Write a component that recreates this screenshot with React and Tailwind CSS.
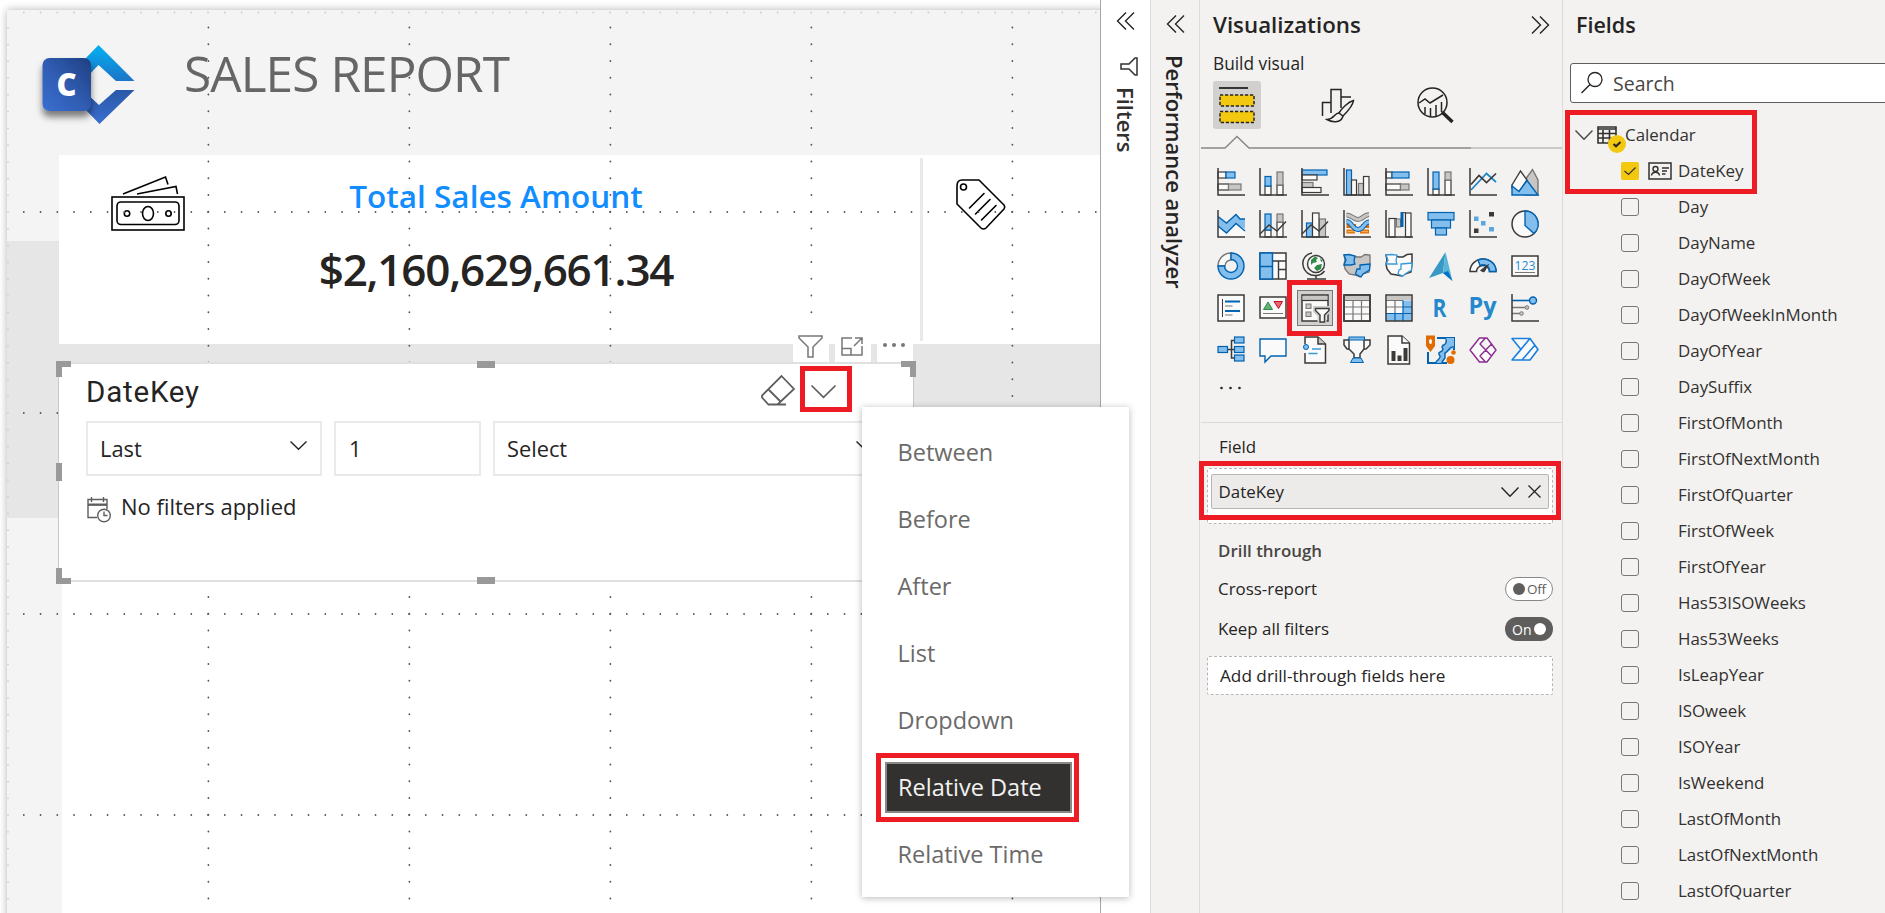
import React from "react";

const D = "#3b3a39";
const BF = "#83beec";
const BS = "#0063b1";
const GF = "#c8c6c4";
const GS = "#797775";
const W = "#fafafa";

const Axis = () => <path d="M1 0V27H28" fill="none" stroke={D} strokeWidth="1.5" />;
const Box = ({ x, y, w, h, t = "w" }) => {
  const c = { b: [BF, BS], g: [GF, GS], w: [W, D] }[t];
  return <rect x={x} y={y} width={w} height={h} fill={c[0]} stroke={c[1]} strokeWidth="1.2" />;
};
const Line = ({ d, s = D, w = 1.4, f = "none" }) => <path d={d} fill={f} stroke={s} strokeWidth={w} />;

const visuals = [
  <><Box x={1} y={4} w={8} h={6} /><Box x={9} y={4} w={9} h={6} t="b" /><Box x={1} y={16} w={10.5} h={6} /><Box x={11.5} y={16} w={12.5} h={6} t="g" /><Axis /></>,
  <><Box x={6} y={18} w={6} h={9} /><Box x={6} y={8.5} w={6} h={9.5} t="b" /><Box x={18} y={17} w={6} h={10} /><Box x={18} y={4} w={6} h={13} t="g" /><Axis /></>,
  <><Box x={1} y={2} w={25} h={5} t="b" /><Box x={1} y={7} w={15} h={5} /><Box x={1} y={14.5} w={11} h={5} t="g" /><Box x={1} y={19.5} w={19} h={5} /><Axis /></>,
  <><Box x={3.5} y={2} w={5} h={25} t="b" /><Box x={8.5} y={12} w={5} h={15} /><Box x={15.5} y={15.5} w={5} h={11.5} t="g" /><Box x={20.5} y={8.5} w={5.5} h={18.5} /><Axis /></>,
  <><Box x={1} y={4} w={6} h={6} /><Box x={7} y={4} w={17} h={6} t="b" /><Box x={1} y={16} w={14.5} h={6} /><Box x={15.5} y={16} w={8.5} h={6} t="g" /><Axis /></>,
  <><Box x={6} y={21} w={6} h={6} /><Box x={6} y={4} w={6} h={17} t="b" /><Box x={18} y={12} w={6} h={15} /><Box x={18} y={4} w={6} h={8} t="g" /><Axis /></>,
  <><Line d="M2 22L17.500 5.500L27 14" s="#1a86c9" w={1.7} /><Line d="M2 16.500L10 7.500L17.500 14.500L27 5.500" w={1.7} /><Axis /></>,
  <><Line d="M14 12L21.500 1.500L27 12V27H14Z" f={GF} s={GS} /><Line d="M1 17L9.500 3L16 12L8 24L1 20Z" f={W} /><Line d="M1 18L8 23.500L16 12.500L27 27H1Z" f={BF} s={BS} /></>,

  <><path d="M1 19L9.500 23L19 14L28 19V27H1Z" fill={W} /><path d="M1 6.500L9.500 13L19 4.500L23 9H28V19L19 14L9.500 23L1 16Z" fill={BF} /><Line d="M1 6.500L9.500 13L19 4.500L23 9H28M1 16L9.500 23L19 13.500L28 21" s={BS} /><Axis /></>,
  <><Box x={6} y={20} w={6} h={7} /><Box x={6} y={4} w={6} h={16} t="b" /><Box x={18} y={12} w={6} h={15} /><Box x={18} y={4} w={6} h={8} t="g" /><Line d="M1 24L10 15L18 21L27 11.500" /><Axis /></>,
  <><Box x={5.5} y={13} w={6} h={14} t="b" /><Box x={18} y={9} w={6.5} h={18} t="g" /><Box x={11.5} y={3} w={6.5} h={24} /><Line d="M1 24L10 15L18 21L27 11.500" /><Axis /></>,
  <><path d="M3.500 16H13M3.500 21.500H12M18 16H26M17 21.500H26" fill="none" stroke="#e06c00" strokeWidth="4" /><path d="M4.500 21.500H12M18 21.500H25" fill="none" stroke="#f5a84c" strokeWidth="1.500" /><path d="M3.500 5C9 5 10 9.500 15 9.500S20 5 26 4.500" fill="none" stroke={GS} strokeWidth="5" /><path d="M3.500 5C9 5 10 9.500 15 9.500S20 5 26 4.500" fill="none" stroke={GF} strokeWidth="3" /><path d="M3.500 11.500C9 11.500 9 19.500 15 19.500S21 12 26 12" fill="none" stroke={BS} strokeWidth="5" /><path d="M3.500 11.500C9 11.500 9 19.500 15 19.500S21 12 26 12" fill="none" stroke={BF} strokeWidth="3" /><Axis /></>,
  <><Box x={4} y={8.500} w={6} h={18.500} /><rect x="11.500" y="9" width="4" height="8" fill={GF} stroke={GS} /><Box x={20.5} y={3} w={5.5} h={24} /><rect x="15.500" y="2" width="3" height="15" fill={BS} /><path d="M10 8.500H12M18 2.700H21" stroke={D} /><Axis /></>,
  <><Box x={1} y={2.5} w={26} h={7.5} t="b" /><Box x={4.500} y={10} w={19} h={8} t="b" /><Box x={8.500} y={18} w={11} h={7} t="b" /></>,
  <><rect x="20" y="2" width="5" height="4.500" fill={D} /><rect x="5" y="6.500" width="4.500" height="4.500" fill="#5aa7df" /><rect x="12" y="11" width="4.500" height="4.500" fill="#5aa7df" /><rect x="20" y="17" width="5" height="4.500" fill="#5aa7df" /><rect x="5" y="18.500" width="4.500" height="4.500" fill={D} /><Axis /></>,
  <><circle cx="14" cy="14" r="13" fill={W} stroke={D} strokeWidth="1.500" /><path d="M14 1A13 13 0 0 1 23 23.500L14 15.500Z" fill={BF} stroke={BS} strokeWidth="1.400" /></>,

  <><path d="M1 14A13 13 0 0 1 14 1V8A6 6 0 0 0 8 14Z" fill={W} stroke={GS} strokeWidth="1.400" /><path d="M14 1A13 13 0 1 1 1 14H7.500A6.500 6.500 0 1 0 14 7.500Z" fill={BF} stroke={BS} strokeWidth="1.400" /></>,
  <><rect x="1" y="1" width="26" height="26" fill={W} stroke={D} strokeWidth="1.500" /><rect x="1" y="1" width="12.500" height="26" fill={BF} stroke={BS} strokeWidth="1.500" /><path d="M1 14.500H13.500" stroke={BS} strokeWidth="1.500" /><path d="M13.500 9H27M19.500 9V27M19.500 17.500H27" stroke={D} strokeWidth="1.400" /></>,
  <><circle cx="15" cy="12" r="8.500" fill={W} stroke={D} strokeWidth="1.400" /><path d="M10 8L14 4.500L17 6L15 8L16 10L12 11L10 13ZM16 13L21 12L20 17L16 19L13 16ZM19 6L22 9L20 10Z" fill="#2e8b45" /><path d="M11 1C5 2 1 7 2 13C3 20 9 24 15 23.500C19 23.500 22 21 23.500 19M15 23.500V27M6 27H25" fill="none" stroke={D} strokeWidth="1.500" /></>,
  <><path d="M1 3H6L14 5L18 5L22 2.500L27 3V12L26 20L20 22L17 25L12 23L6 22L2 17L1 12L2 8Z" fill={GF} stroke={GS} strokeWidth="1.300" /><path d="M1 3L6 2.500L12 4L11 9L12 12L8 13L1 13L3 8Z" fill={BF} stroke={BS} strokeWidth="1.300" /><path d="M17 13L27 12L26.500 18L20 22L18 25L12.500 22L14 17H17Z" fill={BF} stroke={BS} strokeWidth="1.300" /></>,
  <><path d="M1 3H6L14 5L18 5L22 2.500L27 2V12L26 20L20 22L17 24L12 23L6 22L2 17L1 12L2 8Z" fill={W} stroke={D} strokeWidth="1.500" /><path d="M1 3L6 2.500L12 3L11 9L12 12L8 12L1 12L3 8Z" fill={W} stroke="#3a9ad9" strokeWidth="1.300" /><path d="M16 12L27 11L26.500 18L20 22L18 24L13 22L14 18L16 17Z" fill={W} stroke="#3a9ad9" strokeWidth="1.300" /></>,
  <><path d="M18.500 0L2 26L16 21Z" fill="#3999c6" /><path d="M18.500 0L16 21L25.500 29Z" fill="#59b4d9" /><path d="M16 21L21 19L25.500 29Z" fill="#0072c6" /></>,
  <><path d="M1 19.500A13 12.500 0 0 1 27 19.500H20.500A6.500 6 0 0 0 7.500 19.500Z" fill={W} stroke={D} strokeWidth="1.500" /><path d="M9 8A13 12 0 0 1 27 19.500H20.500A6.500 6 0 0 0 11 13.500Z" fill={BF} stroke={BS} strokeWidth="1.400" /><path d="M19.500 12.500L11.500 18.500L15 20Z" fill={D} stroke={D} /></>,
  <><rect x="1" y="4" width="26" height="20" fill={W} stroke={D} strokeWidth="1.500" /><text x="14" y="18.300" textAnchor="middle" fontSize="13" fill="#2a8ad4" fontFamily="Open Sans, sans-serif" textLength="21" lengthAdjust="spacingAndGlyphs">123</text><path d="M4 20.500H24" stroke={GS} /></>,

  <><rect x="1" y="1" width="26" height="26" fill={W} stroke={D} strokeWidth="1.500" /><path d="M5.500 5V23" stroke={D} /><path d="M8 7.500H23M8 17H23" stroke={BS} strokeWidth="2" /><path d="M8 12H15.500M8 21H15.500" stroke={GS} strokeWidth="1.200" /></>,
  <><rect x="1" y="3" width="26" height="21" fill={W} stroke={D} strokeWidth="1.500" /><path d="M4.500 15.500L9 8L13.500 15.500Z" fill="#5fb271" stroke="#2e8b45" /><path d="M15 7.500H23.500L19.500 14.500Z" fill="#e86b6b" stroke="#c50f1f" /><path d="M4 19.500H24" stroke={GS} /></>,
  <><rect x="1" y="1" width="26" height="26" fill={W} stroke={D} strokeWidth="1.500" /><path d="M1.500 2H26.500V6H1.500Z" fill={GF} /><path d="M1 6.500H27" stroke={D} strokeWidth="1.200" /><rect x="5" y="10" width="5" height="4.500" fill={GF} stroke={GS} /><rect x="5" y="18" width="5" height="4.500" fill={GF} stroke={GS} /><path d="M14 14H28V17L23.500 21V28H18.500V21L14 17Z" fill={W} stroke="#d2d0ce" strokeWidth="4" /><path d="M14.500 14.500H28V16.500L23.500 21V28H19V21L14.500 16.500Z" fill={W} stroke={D} strokeWidth="1.400" /></>,
  <><rect x="1" y="1" width="26" height="26" fill={W} stroke={D} strokeWidth="1.500" /><path d="M2 2H26V6H2Z" fill={GF} /><path d="M1 6.500H27M1 13H27M1 20H27M10 6.500V27M18.500 6.500V27" stroke={GS} strokeWidth="1.200" /><rect x="1" y="1" width="26" height="26" fill="none" stroke={D} strokeWidth="1.500" /></>,
  <><rect x="1" y="1" width="26" height="26" fill={W} /><path d="M2 2H26V6H2Z" fill={GF} /><path d="M18 6.500H27V27H1V19H18Z" fill={BF} /><path d="M1 6.500H18M1 13H18M10 6.500V19" stroke={GS} strokeWidth="1.200" /><path d="M18 6.500V27M10 19V27M18 13H27M1 19.500H27" stroke={BS} strokeWidth="1.200" /><rect x="1" y="1" width="26" height="26" fill="none" stroke={D} strokeWidth="1.500" /></>,
  <text x="12.500" y="22.500" textAnchor="middle" fontSize="25" fontWeight="700" fill="#2588cc" fontFamily="Open Sans, sans-serif" textLength="14" lengthAdjust="spacingAndGlyphs">R</text>,
  <text x="-.5" y="19.500" fontSize="24" fontWeight="700" fill="#2588cc" fontFamily="Open Sans, sans-serif" textLength="28" lengthAdjust="spacingAndGlyphs">Py</text>,
  <><path d="M1 6.500H20" stroke={BS} strokeWidth="1.600" /><path d="M1 13.500H14M1 19.500H9" stroke={GS} strokeWidth="1.500" /><circle cx="22" cy="6.500" r="3.500" fill={BF} stroke={BS} strokeWidth="1.400" /><circle cx="16" cy="13.500" r="1.800" fill={GF} stroke={GS} /><circle cx="10.500" cy="19.500" r="1.800" fill={GF} stroke={GS} /><Axis /></>,

  <><path d="M10 13.500H17M18 4.500H14.500V22H18M14.500 13.500" fill="none" stroke={D} strokeWidth="1.500" /><Box x={1} y={10.5} w={9.5} h={6} t="b" /><Box x={17.5} y={1} w={9.5} h={6} t="b" /><Box x={17.5} y={10.500} w={9.5} h={6} t="b" /><Box x={17.5} y={19} w={9.5} h={6} t="b" /></>,
  <Line d="M1 3H27V20H12L6 26V20H1Z" f={W} s={BS} />,
  <><path d="M4 17V27H24.500V8L17 1H4V8" fill={W} stroke={D} strokeWidth="1.500" /><path d="M17 1V8H24.500" fill={GF} stroke={D} strokeWidth="1.500" /><path d="M11 13H20M7.500 17.500H16.500" stroke="#3a9ad9" strokeWidth="1.300" /><circle cx="5" cy="11" r="2.500" fill={BF} stroke={BS} /></>,
  <><path d="M6 4H1V9L4 13H8M21 4H27V9L23 13H20" fill={W} stroke={D} strokeWidth="1.500" /><path d="M6 3H21V13L17 18V22H11V18L6 13Z" fill={W} stroke={D} strokeWidth="1.500" /><rect x="6" y="1" width="15.500" height="3" fill={BF} stroke={BS} /><path d="M10 22H18L20.500 26.500H7.500Z" fill={BF} stroke={BS} /></>,
  <><path d="M3 0H17L24.500 7V28H3Z" fill={W} stroke={D} strokeWidth="1.500" /><path d="M17 0V7H24.500" fill={W} stroke={D} strokeWidth="1.500" /><rect x="6.500" y="15" width="4" height="10" fill={D} /><rect x="12.500" y="19.500" width="4" height="5.500" fill={D} /><rect x="18.500" y="12" width="4" height="13" fill={D} /></>,
  <><path d="M10 2H27V14M1 16V27H20" fill="none" stroke={BS} strokeWidth="2" /><path d="M19 2H27V12L22 15L18 18V22L14 27H9L14 22L11 17L16 13L15 8H19Z" fill={BF} /><path d="M19 3C21 11 12 8 16 13C16 17 9 15 13 20C14 23 10 24 9 26M27 11C21 10 23 15 18 17V22L15 26" fill="none" stroke={BS} strokeWidth="1.400" /><path d="M-1 -.5H8V10L3.500 16L-1 10Z" fill="#e06c00" /><ellipse cx="3.500" cy="5.500" rx="1.500" ry="2.500" fill={W} /><circle cx="23.500" cy="24" r="4" fill="#e06c00" /><circle cx="26.500" cy="16.500" r="2.300" fill="#e06c00" /></>,
  <path d="M1 14L10.500 2H18L27 14L18 26H10.500ZM16.500 2L11 8L22.500 20M16.500 26L11 20L22.500 8" fill={W} stroke="#8a2a92" strokeWidth="1.400" strokeLinejoin="round" />,
  <path d="M1 2.500H19L27 13.500L19 24H1L10 13.500ZM19 2.500L1 24M24 9L11 24" fill={W} stroke="#1a7fe0" strokeWidth="1.600" strokeLinejoin="round" />,
];

const Svg = ({ w, h, vb, className = "", children }) => (
  <svg width={w} height={h} viewBox={vb || `0 0 ${w} ${h}`} className={`block shrink-0 overflow-visible ${className}`}>{children}</svg>
);
const Chevron = ({ w, h, sw = 1.4, c = "#252423", className }) => (
  <Svg w={w} h={h} className={className}>
    <path d={`M.5 .5L${w / 2} ${h - 0.7}L${w - 0.5} .5`} fill="none" stroke={c} strokeWidth={sw} />
  </Svg>
);
const Double = ({ className = "" }) => (
  <Svg w={19} h={18} className={className}>
    <path d="M10 .5L1.500 9L10 17.500M18 .5L9.500 9L18 17.500" fill="none" stroke="#252423" strokeWidth="1.400" />
  </Svg>
);

const Dots = () => {
  const common = { strokeWidth: 1.8, strokeLinecap: "round", strokeDasharray: "0 16.75" };
  return (
    <svg width="1100" height="913" className="absolute inset-0">
      {[208, 409, 610, 811, 1012].map((x) => (
        <line key={x} x1={x + 0.4} x2={x + 0.4} y1="27.5" y2="913" stroke="#555" {...common} />
      ))}
      {[212, 413, 614, 815].map((y) => (
        <line key={y} y1={y} y2={y} x1="23.8" x2="1100" stroke="#555" {...common} />
      ))}
      <line x1="8" x2="8" y1="27.800" y2="913" stroke="#ccc" {...common} />
      <line x1="23.800" x2="1100" y1="12.500" y2="12.500" stroke="#ccc" {...common} />
    </svg>
  );
};

const Logo = () => (
  <Svg w={94} h={84}>
    <defs>
      <linearGradient id="sq" x1="0" y1="1" x2="1" y2="0"><stop offset="0" stopColor="#3a6fd0" /><stop offset=".5" stopColor="#2f5bb0" /><stop offset="1" stopColor="#1f3f80" /></linearGradient>
      <linearGradient id="up" x1="0" y1="0" x2="0" y2="1"><stop offset="0" stopColor="#03b1f2" /><stop offset="1" stopColor="#1c74c8" /></linearGradient>
      <linearGradient id="dn" x1="0" y1="0" x2="0" y2="1"><stop offset="0" stopColor="#2a58a8" /><stop offset="1" stopColor="#3a6fd0" /></linearGradient>
      <filter id="sh" x="-30%" y="-30%" width="160%" height="180%"><feDropShadow dx="0" dy="6" stdDeviation="3.500" floodOpacity=".5" /></filter>
    </defs>
    <path d="M43 15L56.500 1L92.500 37H74L56.500 21L43 35Z" fill="url(#up)" />
    <path d="M43 48L57 61L74 46H92.500L57.500 80L40 62Z" fill="url(#dn)" />
    <rect x="0.500" y="14" width="48.500" height="53" rx="7" fill="url(#sq)" filter="url(#sh)" />
    <text x="24.500" y="52" textAnchor="middle" fontFamily="Open Sans, sans-serif" fontSize="31" fontWeight="800" fill="#fff">C</text>
  </Svg>
);

const Money = () => (
  <Svg w={74} h={55}>
    <g fill="none" stroke="#000" strokeWidth="1.600">
      <rect x="1" y="21" width="72" height="33" />
      <rect x="6" y="26" width="62" height="22.500" rx="4" />
      <ellipse cx="37" cy="37.500" rx="5.500" ry="7" />
      <circle cx="16" cy="37.500" r="2.700" /><circle cx="57.500" cy="37.500" r="2.700" />
      <path d="M12 18L54.500 1L57 8.500M26 18L65 10.500L66.500 18" />
    </g>
  </Svg>
);
const Tag = () => (
  <Svg w={50} h={51}>
    <g fill="none" stroke="#000" strokeWidth="1.600" strokeLinecap="round" strokeLinejoin="round">
      <path d="M6 1H23L48 26Q49.500 28 48 30L30 49Q27.500 51 25 49L1 25V7Q1 1 6 1Z" />
      <circle cx="7.500" cy="8" r="3" />
      <path d="M13.500 29L28 14.500M19.500 35L34 20.500M25.500 41L40 26.500" />
    </g>
  </Svg>
);

const slicerModes = ["Between", "Before", "After", "List", "Dropdown", "Relative Date", "Relative Time"];

const ModeMenu = () => (
  <div className="absolute left-[862px] top-[407px] flex h-[490px] w-[267px] flex-col bg-white pt-[12px] shadow-[0_1px_7px_rgba(0,0,0,0.28)]">
    {slicerModes.map((m) => (
      <div key={m} className="flex h-[67px] shrink-0 items-center pl-[23px] pr-[57px]">
        <div className={`flex h-[51px] w-full items-center whitespace-nowrap text-[23.500px] ${m === "Relative Date" ? "border-2 border-[#8a8886] bg-[#323130] pl-[11px] text-[#f3f2f1]" : "pl-[12.500px] text-[#6b6a69]"}`}>
          {m}
        </div>
      </div>
    ))}
  </div>
);

const Handle = ({ className }) => <div className={`absolute border-[#999] ${className}`} />;

const Slicer = () => (
  <div className="absolute left-[58px] top-[362px] h-[220px] w-[856px] border border-[#c8c8c8] border-y-2 border-y-[#e0e0e0] bg-white">
    <div className="flex h-[51px] items-center justify-between pl-[27px] pr-[77px] pt-[3px]">
      <span className="mt-[2px] font-['Roboto'] text-[29.500px] font-[430] tracking-[0.8px] text-[#252423]">DateKey</span>
      <div className="flex items-center gap-[16px]">
        <Svg w={34} h={31} className="-mt-[2px]">
          <path d="M20.500 1L33 14L16.500 29.500H7.500L1 22.500V20.500ZM7.500 14.500L19.500 26.500M7 29.500H25" fill="none" stroke="#605e5c" strokeWidth="1.800" />
        </Svg>
        <Chevron w={25} h={13} sw={1.700} c="#605e5c" />
      </div>
    </div>
    <div className="ml-[27px] mt-[6px] flex gap-[12px] text-[21.800px] text-[#252423]">
      <div className="flex h-[55px] w-[236px] items-center justify-between border-2 border-[#eaeaea] pl-[12px] pr-[13px] pt-[2px]">
        Last <Chevron w={17} h={9} className="mb-[8px]" />
      </div>
      <div className="flex h-[55px] w-[147px] items-center border-2 border-[#eaeaea] pl-[13px] pt-[2px]">1</div>
      <div className="flex h-[55px] w-[400px] items-center justify-between border-2 border-[#eaeaea] pl-[12px] pr-[18px] pt-[2px]">
        Select <Chevron w={17} h={9} className="mb-[8px]" />
      </div>
    </div>
    <div className="ml-[28px] mt-[14px] flex h-[32px] items-center gap-[10px] text-[22px] text-[#252423]">
      <Svg w={24} h={26} className="mt-[7px]">
        <g fill="none" stroke="#605e5c" strokeWidth="1.400">
          <path d="M10 20.500H1V2.500H20V12M1 8H20M4.500 0V5M16.500 0V5" />
          <path d="M1 7.500H20" strokeWidth="2" />
          <circle cx="17" cy="18.500" r="6.300" fill="#fff" /><path d="M17 14.500V18.500H20.500" />
        </g>
      </Svg>
      No filters applied
    </div>
    <Handle className="-left-[3px] -top-[3px] h-[16px] w-[15px] border-l-[6px] border-t-[6px]" />
    <Handle className="-right-[3px] -top-[3px] h-[16px] w-[15px] border-r-[6px] border-t-[6px]" />
    <Handle className="-bottom-[4px] -left-[3px] h-[16px] w-[15px] border-b-[6px] border-l-[6px]" />
    <Handle className="-top-[3px] left-[418px] w-[18px] border-t-[7px]" />
    <Handle className="-bottom-[4px] left-[418px] w-[18px] border-t-[7px]" />
    <Handle className="-left-[3px] top-[99px] h-[18px] border-l-[6px]" />
  </div>
);

const VisualHeader = () => (
  <div className="absolute left-[793px] top-[326px] flex gap-[6px]">
    <div className="flex h-[36px] w-[36px] bg-white pl-[5px] pt-[9px]">
      <Svg w={25} h={23}><path d="M1 1H24V3L15 12V22H10V12L1 3Z" fill="none" stroke="#797775" strokeWidth="1.500" /></Svg>
    </div>
    <div className="flex h-[36px] w-[36px] bg-white pl-[6px] pt-[11px]">
      <Svg w={22} h={19}><path d="M11 1H1V18H21V9M14 1H21V7M21 1L13 9M1 11.500H10V18" fill="none" stroke="#797775" strokeWidth="1.500" /></Svg>
    </div>
    <div className="flex h-[36px] w-[36px] bg-white pl-[5px] pt-[17px]">
      <Svg w={24} h={4}><g fill="#797775"><circle cx="3" cy="2" r="2" /><circle cx="12" cy="2" r="2" /><circle cx="21" cy="2" r="2" /></g></Svg>
    </div>
  </div>
);

const Report = () => (
  <div className="relative h-full w-[1100px] shrink-0 overflow-hidden bg-white pl-[7px] pt-[10px]">
    <div className="h-[920px] w-[1110px] bg-[#f4f4f4] shadow-[0_0_8px_rgba(0,0,0,0.3)]">
      <div className="flex h-[145px] pl-[35px] pt-[34px]">
        <Logo />
        <h1 className="-mt-[6px] ml-[48px] whitespace-nowrap text-[49.500px] leading-[70px] tracking-[-0.9px] text-[#666]">SALES REPORT</h1>
      </div>
      <div className="relative h-[363px]">
        <div className="absolute inset-x-0 top-[86px] h-[277px] bg-[#e6e6e6]" />
        <div className="relative ml-[52px] flex h-[189px] bg-white">
          <div className="flex w-[863px] pl-[52px] pt-[21px]">
            <Money />
            <div className="ml-[66px] flex w-[490px] flex-col items-center whitespace-nowrap">
              <span className="-mt-[2px] text-[31.500px] font-semibold leading-[44px] text-[#118dff]">Total Sales Amount</span>
              <span className="mt-[21px] text-[44px] font-[560] leading-[60px] tracking-[-1.2px] text-[#252423]">$2,160,629,661.34</span>
            </div>
          </div>
          <div className="mt-[3px] h-[183px] w-[3px] -ml-[2px] bg-[#e9e9e9]" />
          <div className="pl-[33px] pt-[24px]"><Tag /></div>
        </div>
      </div>
      <div className="ml-[55px] mt-[63px] h-[340px] bg-white" />
    </div>
    <Dots />
    <VisualHeader />
    <Slicer />
  </div>
);

const Filters = () => (
  <div className="flex h-full w-[51px] shrink-0 flex-col items-center border-x border-l-[#a8a6a4] border-r-[#dcdbda] bg-white pt-[12px]">
    <Double />
    <Svg w={18} h={19} className="ml-[6px] mt-[27px]"><path d="M17 1V18H15L9 12H1V7H9L15 1Z" fill="none" stroke="#323130" strokeWidth="1.500" /></Svg>
    <span className="mt-[11px] text-[22px] font-semibold leading-[30px] text-[#323130] [writing-mode:vertical-rl]">Filters</span>
  </div>
);

const Performance = () => (
  <div className="flex h-full w-[49px] shrink-0 flex-col items-center border-r border-[#dcdbda] pt-[15px]">
    <Double />
    <span className="mt-[22px] whitespace-nowrap text-[22px] font-semibold leading-[30px] text-[#252423] [writing-mode:vertical-rl]">Performance analyzer</span>
  </div>
);

const BuildTabs = () => (
  <div className="flex h-[48px] pl-[13px]">
    <div className="flex h-[48px] w-[48px] rounded-[3px] bg-[#d2d0ce] pl-[6px] pt-[6px]">
      <Svg w={36} h={37}>
        <path d="M0 1H29" stroke="#252423" strokeWidth="1.800" />
        <rect x="1" y="8" width="34" height="11" fill="#f2c811" /><rect x="1" y="24.500" width="34" height="11" fill="#f2c811" />
        <path d="M1 8H35V19H1ZM1 24.500H35V35.500H1Z" fill="none" stroke="#252423" strokeWidth="1.500" strokeDasharray="3.200 1.800" />
      </Svg>
    </div>
    <Svg w={34} h={36} className="ml-[60px] mt-[7px]">
      <g fill="none" stroke="#252423" strokeWidth="1.500">
        <path d="M1.500 28V14.500H10M10 25V1.500H20V20M20 9H30" />
        <path d="M32.500 12.500C27 14 21 20 18 25L22 28C27 23 32 17 32.500 12.500Z" fill="#f3f2f1" />
        <path d="M18 25C13 25 14 31 6 31.500C10 34 20 36 22 28" />
      </g>
    </Svg>
    <Svg w={37} h={37} className="ml-[62px] mt-[6px]">
      <g fill="none" stroke="#252423" strokeWidth="1.500">
        <circle cx="15.500" cy="15.500" r="14.500" />
        <path d="M2 16L8 12L13 16L26 8M8 20V27M13.500 21V29.500M19 18V29M24.500 15V25" />
        <path d="M25 25L35.500 35" strokeWidth="3.500" />
      </g>
    </Svg>
  </div>
);

const Toggle = ({ on }) => (
  <div className={`flex h-[24px] w-[48px] items-center rounded-full leading-none ${on ? "bg-[#605e5c] pl-[7px] text-[14px] text-white" : "border border-[#8a8886] bg-white pl-[7px] text-[13.500px] text-[#605e5c]"}`}>
    {on ? <><span className="w-[22px] pt-[2px]">On</span><i className="h-[12px] w-[12px] rounded-full bg-white" /></> : <><i className="h-[12px] w-[12px] rounded-full bg-[#605e5c]" /><span className="ml-[2px] pt-[2px] tracking-[-0.3px]">Off</span></>}
  </div>
);

const Visualizations = () => (
  <div className="flex h-full w-[363px] shrink-0 flex-col border-r border-[#dcdbda] text-[16.900px] text-[#252423]">
    <div className="flex h-[50px] items-center justify-between pl-[13px] pr-[12px]">
      <h2 className="text-[22.300px] font-[580]">Visualizations</h2>
      <Double className="rotate-180" />
    </div>
    <div className="h-[31px] pl-[13px] pt-[1px] text-[17.300px] font-medium leading-[26px]">Build visual</div>
    <BuildTabs />
    <Svg w={362} h={14} className="mt-[6px]">
      <path d="M1 13H25L37 1.500L49 13H271" fill="none" stroke="#8a8886" strokeWidth="1.500" /><path d="M271 13H362" stroke="#bebbb8" strokeWidth="1.500" />
    </Svg>
    <div className="ml-[10px] mt-[12px] grid w-[336px] grid-cols-8">
      {visuals.map((v, i) => (
        <div key={i} className="flex h-[42px] w-[42px] items-center justify-center">
          <div className={i === 26 ? "flex h-[36px] w-[36px] items-center justify-center border border-[#797775] bg-[#d2d0ce]" : ""}>
            <Svg w={28} h={28}>{v}</Svg>
          </div>
        </div>
      ))}
    </div>
    <Svg w={24} h={4} className="ml-[19px] mt-[15px]"><g fill="#252423"><circle cx="2.500" cy="2" r="1.300" /><circle cx="11.500" cy="2" r="1.300" /><circle cx="20.500" cy="2" r="1.300" /></g></Svg>
    <div className="ml-[1px] mt-[32px] border-t border-[#dcdbda] pl-[18px] pt-[10px] leading-[28px]">Field</div>
    <div className="ml-[7px] mt-[7px] h-[56px] w-[346px] rounded-[2px] border border-dashed border-[#b8b6b4] bg-white px-[3px] pt-[5px]">
      <div className="flex h-[35px] items-center rounded-[2px] border border-[#b8b6b4] bg-[#edebe9] pl-[6.500px] pr-[7px]">
        <span className="flex-1">DateKey</span>
        <Chevron w={18} h={10} />
        <Svg w={13} h={13} className="ml-[9px]"><path d="M.5 .5L12.500 12.500M12.500 .5L.5 12.500" stroke="#252423" strokeWidth="1.300" /></Svg>
      </div>
    </div>
    <div className="mt-[13px] pl-[18px] font-semibold leading-[28px] text-[#484644]">Drill through</div>
    <div className="mt-[12px] flex h-[24px] items-center justify-between pl-[18px] pr-[9px]"><span className="-mt-px">Cross-report</span> <Toggle /></div>
    <div className="mt-[16px] flex h-[24px] items-center justify-between pl-[18px] pr-[9px]"><span className="-mt-px">Keep all filters</span> <Toggle on /></div>
    <div className="ml-[7px] mt-[15px] flex h-[39px] w-[346px] items-center rounded-[2px] border border-dashed border-[#b8b6b4] bg-white pl-[12px] text-[17.200px]">Add drill-through fields here</div>
  </div>
);

const fieldNames = ["DateKey", "Day", "DayName", "DayOfWeek", "DayOfWeekInMonth", "DayOfYear", "DaySuffix", "FirstOfMonth", "FirstOfNextMonth", "FirstOfQuarter", "FirstOfWeek", "FirstOfYear", "Has53ISOWeeks", "Has53Weeks", "IsLeapYear", "ISOweek", "ISOYear", "IsWeekend", "LastOfMonth", "LastOfNextMonth", "LastOfQuarter"];

const Fields = () => (
  <div className="h-full min-w-0 flex-1 overflow-hidden text-[16.900px] text-[#323130]">
    <h2 className="flex h-[50px] items-center pl-[13px] text-[21.500px] font-[650] text-[#252423]">Fields</h2>
    <div className="ml-[7px] mt-[13px] flex h-[40px] w-[340px] items-center rounded-[3px] border border-[#605e5c] bg-white pl-[10px] text-[19.500px] text-[#484644]">
      <Svg w={22} h={22} className="mr-[10px]"><circle cx="14" cy="7.500" r="7" fill="none" stroke="#252423" strokeWidth="1.300" /><path d="M9 12.500L.5 21" stroke="#252423" strokeWidth="1.500" /></Svg>
      <span className="mt-[2px]">Search</span>
    </div>
    <div className="mt-[14px] flex h-[36px] items-center pl-[12px]">
      <Chevron w={18} h={10} c="#484644" />
      <Svg w={20} h={18} className="ml-[4px]">
        <path d="M1 1H19V17H1ZM1 3H19M1 7.500H19M1 12H19M6 4V17M12.500 4V17" fill="none" stroke="#323130" strokeWidth="1.600" />
        <circle cx="20" cy="18" r="9" fill="#f2c811" /><path d="M16.500 18L19 20.300L23.500 16" fill="none" stroke="#252423" strokeWidth="2" />
      </Svg>
      <span className="ml-[8px]">Calendar</span>
    </div>
    {fieldNames.map((f, i) => (
      <div key={f} className="flex h-[36px] items-center pl-[58px]">
        {i === 0 ? (
          <>
            <div className="h-[18px] w-[18px] rounded-[2px] bg-[#f2c811]"><Svg w={18} h={18}><path d="M3.500 9L7.500 12.500L14.500 5.500" fill="none" stroke="#323130" strokeWidth="1.200" /></Svg></div>
            <Svg w={24} h={18} className="ml-[9px] mr-[6px]"><path d="M1 1H23V17H1ZM3.500 13.500C4 9 11 9 11.500 13.500M14 6H21M14 9H19M14 12H17.500" fill="none" stroke="#323130" strokeWidth="1.500" /><circle cx="7.500" cy="7" r="2.500" fill="none" stroke="#323130" strokeWidth="1.400" /></Svg>
          </>
        ) : (
          <div className="mr-[39px] h-[18px] w-[18px] rounded-[3px] border border-[#797775]" />
        )}
        <span className="whitespace-nowrap">{f}</span>
      </div>
    ))}
  </div>
);

const Callout = ({ className }) => <div className={`pointer-events-none absolute border-[5px] border-[#ed1c24] ${className}`} />;

export default function App() {
  return (
    <div className="relative flex h-[913px] w-[1885px] overflow-hidden bg-[#f3f2f1] font-['Open_Sans','Noto_Sans',sans-serif]">
      <Report />
      <Filters />
      <Performance />
      <Visualizations />
      <Fields />
      <ModeMenu />
      <Callout className="left-[800px] top-[366px] h-[46px] w-[52px]" />
      <Callout className="left-[876px] top-[753px] h-[69px] w-[203px]" />
      <Callout className="left-[1287px] top-[280px] h-[56px] w-[55px]" />
      <Callout className="left-[1199px] top-[461px] h-[59px] w-[362px]" />
      <Callout className="left-[1565px] top-[110px] h-[84px] w-[192px]" />
    </div>
  );
}
